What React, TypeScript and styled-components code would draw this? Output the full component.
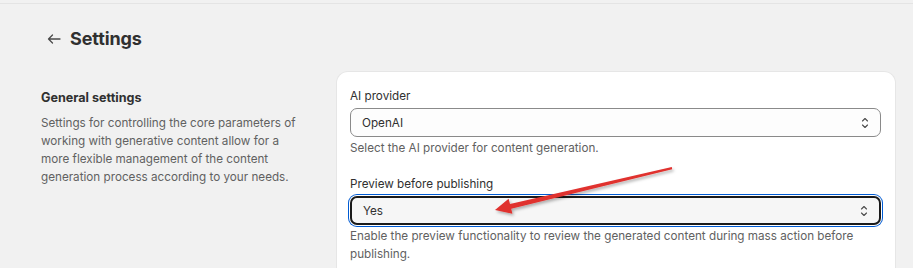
import React from 'react';
import styled, { createGlobalStyle } from 'styled-components';

const GlobalStyle = createGlobalStyle`
  html, body {
    margin: 0;
    padding: 0;
    background: #f1f1f1;
    font-family: Inter, 'Noto Sans', sans-serif;
    color: #303030;
    overflow: hidden;
  }
`;

type Field = {
  label: string;
  value: string;
  help: string;
  focused?: boolean;
};

const fields: Field[] = [
  { label: 'AI provider', value: 'OpenAI', help: 'Select the AI provider for content generation.' },
  {
    label: 'Preview before publishing',
    value: 'Yes',
    help: 'Enable the preview functionality to review the generated content during mass action before publishing.',
    focused: true,
  },
];

function SelectIcon() {
  return (
    <svg width='10' height='14' viewBox='0 0 10 14' fill='none'>
      <path d='M2.5 5 L5 2.5 L7.5 5' stroke='#4a4a4a' strokeWidth='1.1' strokeLinecap='round' strokeLinejoin='round' />
      <path d='M2.5 9 L5 11.5 L7.5 9' stroke='#4a4a4a' strokeWidth='1.1' strokeLinecap='round' strokeLinejoin='round' />
    </svg>
  );
}

function BackArrow() {
  return (
    <svg width='14' height='10' viewBox='0 0 14 10' fill='none'>
      <path d='M13 5 H1.5 M5.5 1 L1.5 5 L5.5 9' stroke='#4a4a4a' strokeWidth='1.3' strokeLinecap='round' strokeLinejoin='round' />
    </svg>
  );
}

export default function App() {
  return (
    <Screen>
      <GlobalStyle />
      <TopBar />
      <Header>
        <BackButton>
          <BackArrow />
        </BackButton>
        <Title>Settings</Title>
      </Header>
      <Section>
        <Aside>
          <AsideTitle>General settings</AsideTitle>
          <AsideText>
            Settings for controlling the core parameters of working with generative content allow for a more flexible
            management of the content generation process according to your needs.
          </AsideText>
        </Aside>
        <Card>
          {fields.map((f) => (
            <FieldWrap key={f.label}>
              <Label>{f.label}</Label>
              <SelectBox focused={!!f.focused}>
                <span>{f.value}</span>
                <SelectIcon />
              </SelectBox>
              <Help>{f.help}</Help>
            </FieldWrap>
          ))}
        </Card>
      </Section>
      <Annotation width='913' height='268' viewBox='0 0 913 268'>
        <defs>
          <filter id='sh' x='-10%' y='-50%' width='120%' height='200%'>
            <feDropShadow dx='1.5' dy='2' stdDeviation='1.5' floodColor='#000' floodOpacity='0.3' />
          </filter>
        </defs>
        <polygon
          filter='url(#sh)'
          fill='#e0312f'
          points='671.8,167 510,203.9 508.6,198.8 495,210 512.4,213.8 511.2,208.7 672.2,169.2'
        />
      </Annotation>
    </Screen>
  );
}

const Screen = styled.div`
  position: relative;
  width: 913px;
  height: 268px;
  overflow: hidden;
`;

const TopBar = styled.div`
  height: 3px;
  border-bottom: 1px solid #e4e4e4;
`;

const Header = styled.div`
  display: flex;
  align-items: center;
  gap: 9px;
  padding: 24px 0 0 47px;
  height: 22px;
`;

const BackButton = styled.div`
  display: flex;
  align-items: center;
  width: 14px;
  height: 22px;
`;

const Title = styled.h1`
  margin: 0;
  font-size: 18px;
  line-height: 22px;
  font-weight: 700;
  color: #303030;
  letter-spacing: -0.1px;
`;

const Section = styled.div`
  display: grid;
  grid-template-columns: 280px 558px;
  gap: 16px;
  padding: 22px 0 0 41px;
`;

const Aside = styled.div`
  padding-top: 17px;
`;

const AsideTitle = styled.h2`
  margin: 0 0 7px;
  font-size: 12.6px;
  line-height: 18px;
  font-weight: 650;
  color: #303030;
`;

const AsideText = styled.p`
  margin: 0;
  width: 266px;
  font-size: 11.7px;
  line-height: 18px;
  color: #616161;
`;

const Card = styled.div`
  background: #ffffff;
  border-radius: 11px;
  box-shadow: 0 0 0 1px #e6e6e6, 0 1px 0 rgba(26, 26, 26, 0.07);
  padding: 15px 14px 16px 13px;
  display: flex;
  flex-direction: column;
  gap: 18px;
  height: 300px;
`;

const FieldWrap = styled.div`
  display: flex;
  flex-direction: column;
`;

const Label = styled.label`
  font-size: 11.7px;
  line-height: 18px;
  color: #303030;
  margin-bottom: 3px;
`;

const SelectBox = styled.div<{ focused: boolean }>`
  box-sizing: border-box;
  height: 29px;
  display: flex;
  align-items: center;
  justify-content: space-between;
  padding: 0 10px 0 11px;
  font-size: 11.7px;
  color: #303030;
  border-radius: 7px;
  background: ${(p) => (p.focused ? '#f6f6f6' : '#fdfdfd')};
  border: ${(p) => (p.focused ? '2px solid #1a1a1a' : '1px solid #8a8a8a')};
  box-shadow: ${(p) => (p.focused ? '0 0 0 1px #ffffff, 0 0 0 2px #005bd3' : 'none')};
  span {
    padding-top: 1px;
  }
`;

const Help = styled.div`
  margin-top: 2px;
  font-size: 11.7px;
  line-height: 18px;
  color: #616161;
`;

const Annotation = styled.svg`
  position: absolute;
  top: 0;
  left: 0;
  pointer-events: none;
`;
